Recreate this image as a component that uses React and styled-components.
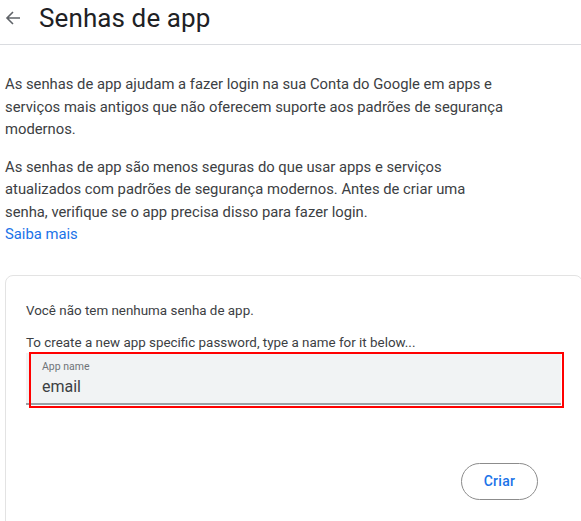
import styled, { createGlobalStyle } from "styled-components";

const Global = createGlobalStyle`
	body {
		margin: 0;
		background: #ffffff;
		font-family: Roboto, "Noto Sans", Arial, sans-serif;
		color: #3c4043;
	}
`;

const Page = styled.div`
	width: 581px;
	height: 521px;
	overflow: hidden;
	display: flex;
	flex-direction: column;
	& > * {
		flex-shrink: 0;
	}
`;

const Header = styled.div`
	display: flex;
	align-items: center;
	height: 45px;
	box-sizing: border-box;
	border-bottom: 1px solid #dadce0;
	padding: 0 0 8px 4px;
	gap: 17px;
`;

const BackButton = styled.button`
	border: none;
	background: none;
	padding: 0;
	width: 18px;
	height: 18px;
	display: flex;
	align-items: center;
	justify-content: center;
	color: #5f6368;
`;

const Title = styled.h1`
	margin: 0;
	font-size: 26px;
	line-height: 30px;
	font-weight: 400;
	color: #202124;
	letter-spacing: 0.1px;
`;

const Body = styled.div`
	padding: 0 5px;
`;

const Para = styled.p`
	margin: ${(p) => p.$top || 0}px 0 0;
	max-width: 501px;
	font-size: 14.8px;
	line-height: 22.5px;
	color: #3c4043;
`;

const Link = styled.a`
	color: #1a73e8;
	text-decoration: none;
`;

const Card = styled.div`
	margin: 29px -2px 0 5px;
	border: 1px solid #e3e3e3;
	border-radius: 8px;
	padding: 27px 18px 0 20px;
	height: 290px;
	box-sizing: border-box;
`;

const CardText = styled.p`
	margin: ${(p) => p.$top || 0}px 0 0;
	font-size: 13.4px;
	line-height: 16px;
	color: #3c4043;
`;

const Field = styled.div`
	position: relative;
	margin-top: 2px;
	width: 535px;
	height: 52px;
	box-sizing: border-box;
	background: #f1f3f4;
	border-bottom: 2px solid #9aa0a6;
	padding: 8px 16px 0;
`;

const Highlight = styled.div`
	position: absolute;
	left: 3px;
	top: -1px;
	right: -3px;
	bottom: -5px;
	border: 2.5px solid #ff0000;
	pointer-events: none;
`;

const FieldLabel = styled.div`
	font-size: 10.5px;
	color: #6f7378;
	line-height: 12px;
`;

const FieldValue = styled.div`
	margin-top: 5px;
	font-size: 16px;
	color: #3c4043;
	line-height: 18px;
`;

const Actions = styled.div`
	display: flex;
	justify-content: flex-end;
	margin-top: 58px;
	padding-right: 26px;
`;

const PillButton = styled.button`
	width: 77px;
	height: 37px;
	border-radius: 19px;
	border: 1px solid #8c8c8c;
	background: #ffffff;
	color: #1a73e8;
	font-family: Roboto, "Noto Sans", Arial, sans-serif;
	font-size: 14px;
	font-weight: 500;
	letter-spacing: 0.3px;
`;

export default function App() {
	return (
		<Page>
			<Global />
			<Header>
				<BackButton aria-label="Voltar">
					<svg width="16" height="16" viewBox="0 0 16 16">
						<path d="M15 8H2M8 2L2 8l6 6" fill="none" stroke="currentColor" strokeWidth="1.6" />
					</svg>
				</BackButton>
				<Title>Senhas de app</Title>
			</Header>
			<Body>
				<Para $top={28}>
					As senhas de app ajudam a fazer login na sua Conta do Google em apps e
					serviços mais antigos que não oferecem suporte aos padrões de segurança
					modernos.
				</Para>
				<Para $top={15}>
					As senhas de app são menos seguras do que usar apps e serviços
					atualizados com padrões de segurança modernos. Antes de criar uma
					senha, verifique se o app precisa disso para fazer login.
					<br />
					<Link href="#">Saiba mais</Link>
				</Para>
			</Body>
			<Card>
				<CardText>Você não tem nenhuma senha de app.</CardText>
				<CardText $top={16}>To create a new app specific password, type a name for it below...</CardText>
				<Field>
					<FieldLabel>App name</FieldLabel>
					<FieldValue>email</FieldValue>
					<Highlight />
				</Field>
				<Actions>
					<PillButton>Criar</PillButton>
				</Actions>
			</Card>
		</Page>
	);
}
